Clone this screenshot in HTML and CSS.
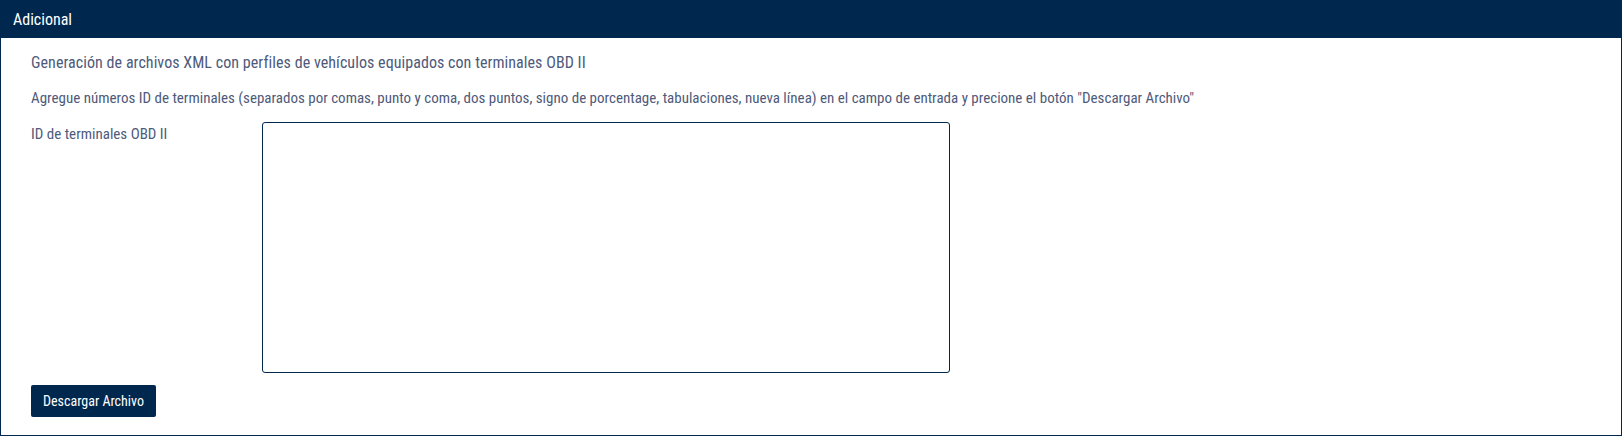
FILE: index.html
```html
<!DOCTYPE html>
<html lang="es">
<head>
<meta charset="utf-8">
<title>Adicional</title>
<link rel="stylesheet" href="styles.css">
</head>
<body>
<section class="panel">
  <header class="panel-header">Adicional</header>
  <div class="panel-body">
    <p class="intro">Generación de archivos XML con perfiles de vehículos equipados con terminales OBD II</p>
    <p class="hint">Agregue números ID de terminales (separados por comas, punto y coma, dos puntos, signo de porcentage, tabulaciones, nueva línea) en el campo de entrada y precione el botón "Descargar Archivo"</p>
    <div class="field-row">
      <label class="field-label" for="ids">ID de terminales OBD II</label>
      <textarea id="ids" class="field-input"></textarea>
    </div>
    <button class="btn-primary" type="button">Descargar Archivo</button>
  </div>
</section>
</body>
</html>
```

FILE: styles.css
```css
html, body {
  margin: 0;
  padding: 0;
  background: #ffffff;
}

body {
  font-family: "Roboto Condensed", "Liberation Sans Narrow", Roboto, "Liberation Sans", sans-serif;
  font-stretch: condensed;
}

.panel {
  box-sizing: border-box;
  width: 100%;
  height: 436px;
  border: 1px solid #00284f;
  display: flex;
  flex-direction: column;
}

.panel-header {
  height: 37px;
  line-height: 37px;
  background: #00284f;
  color: #ffffff;
  font-size: 16px;
  padding-left: 12px;
}

.panel-body {
  padding: 15px 30px 0 30px;
  display: flex;
  flex-direction: column;
  align-items: flex-start;
}

.intro,
.hint {
  margin: 0;
  font-size: 15px;
  line-height: 20px;
  color: #4e5a7a;
}

.intro {
  font-size: 16px;
  letter-spacing: 0.06px;
}

.hint {
  margin-top: 15px;
}

.field-row {
  margin-top: 14px;
  display: flex;
  align-items: flex-start;
}

.field-label {
  width: 231px;
  padding-top: 2px;
  font-size: 15px;
  line-height: 20px;
  color: #4e5a7a;
}

.field-input {
  box-sizing: border-box;
  width: 688px;
  height: 251px;
  margin: 0;
  border: 1px solid #00284f;
  border-radius: 3px;
  resize: none;
  outline: none;
  font-family: inherit;
}

.btn-primary {
  margin-top: 12px;
  width: 125px;
  height: 32px;
  padding: 0;
  border: none;
  border-radius: 2px;
  background: #00284f;
  color: #ffffff;
  font-family: inherit;
  font-stretch: condensed;
  font-size: 14px;
  font-weight: 400;
  cursor: pointer;
}
```
